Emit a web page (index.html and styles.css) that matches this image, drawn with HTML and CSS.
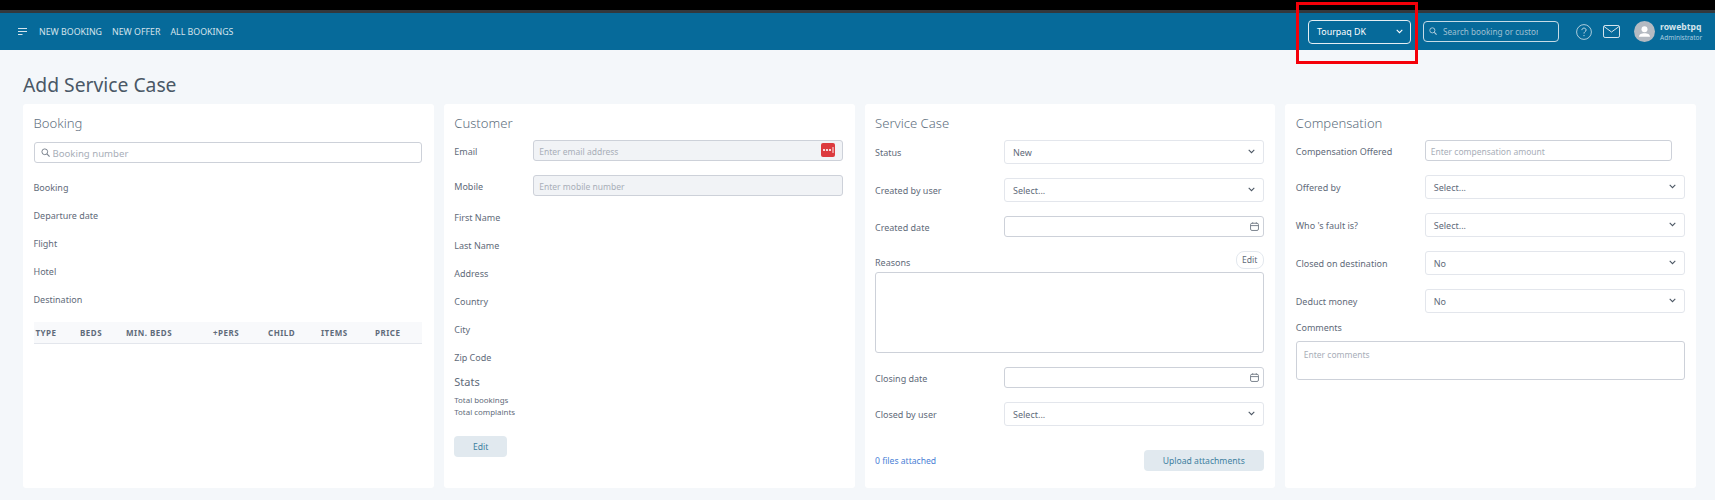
FILE: index.html
```html
<!DOCTYPE html>
<html>
<head>
  <meta name="viewport" content="width=device-width, initial-scale=1.0">
  <title>Add Service Case</title>
  <link rel="stylesheet" href="styles.css">
</head>
<body>
  <svg class="defs" width="0" height="0">
    <symbol id="chevron" viewBox="0 0 10 7"><path d="M1 1.2l4 4 4-4" fill="none" stroke="currentColor" stroke-width="1.5"/></symbol>
    <symbol id="calendar" viewBox="0 0 10 10"><rect x=".6" y="1.4" width="8.8" height="8" rx="1.6" fill="none" stroke="currentColor"/><path d="M.8 4h8.4M3 .3v1.6M7 .3v1.6" fill="none" stroke="currentColor"/></symbol>
    <symbol id="search" viewBox="0 0 10 10"><circle cx="4.2" cy="4.2" r="3.2" fill="none" stroke="currentColor" stroke-width="1.1"/><path d="M6.6 6.6l2.9 2.9" fill="none" stroke="currentColor" stroke-width="1.3"/></symbol>
  </svg>

  <div class="topline"></div>
  <nav class="navbar">
    <svg class="menu-icon" viewBox="0 0 9 8"><path d="M0 .5h9M0 3.5h9M0 6.5h4.5" fill="none" stroke="currentColor" stroke-width="1"/></svg>
    <a class="nav-link">NEW BOOKING</a>
    <a class="nav-link">NEW OFFER</a>
    <a class="nav-link">ALL BOOKINGS</a>
    <div class="nav-right">
      <div class="agency-select">
        <span>Tourpaq DK</span>
        <svg class="agency-chevron"><use href="#chevron"/></svg>
      </div>
      <div class="nav-search">
        <svg class="nav-search-icon"><use href="#search"/></svg>
        <input type="text" placeholder="Search booking or customer">
      </div>
      <svg class="help-icon" viewBox="0 0 16 16"><circle cx="8" cy="8" r="7.4" fill="none" stroke="currentColor" stroke-width=".8"/><path d="M5.9 6.1c0-1.3 1-2 2.1-2s2.1.8 2.1 1.9c0 1.6-2.1 1.7-2.1 3.5" fill="none" stroke="currentColor" stroke-width=".9"/><circle cx="8" cy="11.6" r=".6" fill="currentColor"/></svg>
      <svg class="mail-icon" viewBox="0 0 17 13"><rect x=".5" y=".5" width="16" height="12" rx="1.6" fill="none" stroke="currentColor"/><path d="M1 1.5l7.5 5.5 7.5-5.5" fill="none" stroke="currentColor"/></svg>
      <svg class="avatar" viewBox="0 0 21 21"><circle cx="10.5" cy="10.5" r="10.5" fill="#b4bac2"/><circle cx="10.5" cy="8.2" r="3" fill="#fff"/><path d="M5 15.8c0-2.6 2.5-3.6 5.500-3.6s5.500 1 5.500 3.6z" fill="#fff"/></svg>
      <div class="user">
        <div class="user-name">rowebtpq</div>
        <div class="user-role">Administrator</div>
      </div>
    </div>
  </nav>
  <div class="highlight"></div>

  <h1 class="page-title">Add Service Case</h1>

  <div class="cards">
    <div class="card">
      <h2 class="card-title">Booking</h2>
      <div class="booking-search">
        <svg class="booking-search-icon"><use href="#search"/></svg>
        <input class="control" type="text" placeholder="Booking number">
      </div>
      <div class="plain-row">Booking</div>
      <div class="plain-row">Departure date</div>
      <div class="plain-row">Flight</div>
      <div class="plain-row">Hotel</div>
      <div class="plain-row">Destination</div>
      <div class="rooms-head">
        <span>TYPE</span>
        <span>BEDS</span>
        <span>MIN. BEDS</span>
        <span>+PERS</span>
        <span>CHILD</span>
        <span>ITEMS</span>
        <span>PRICE</span>
      </div>
    </div>

    <div class="card">
      <h2 class="card-title">Customer</h2>
      <div class="field customer-field input-field">
        <label>Email</label>
        <div class="control-wrap">
          <input class="control disabled" type="text" placeholder="Enter email address" disabled>
          <svg class="lastpass" viewBox="0 0 14 14"><rect width="14" height="14" rx="2" fill="#dc3a3e"/><circle cx="3" cy="7" r="1.1" fill="#fff"/><circle cx="6" cy="7" r="1.1" fill="#fff"/><circle cx="9" cy="7" r="1.1" fill="#fff"/><path d="M12 4v6" stroke="#fff" stroke-width=".9"/></svg>
        </div>
      </div>
      <div class="field customer-field input-field">
        <label>Mobile</label>
        <div class="control-wrap">
          <input class="control disabled" type="text" placeholder="Enter mobile number" disabled>
        </div>
      </div>
      <div class="customer-info">
        <div class="plain-row">First Name</div>
        <div class="plain-row">Last Name</div>
        <div class="plain-row">Address</div>
        <div class="plain-row">Country</div>
        <div class="plain-row">City</div>
        <div class="plain-row">Zip Code</div>
      </div>
      <h3 class="stats-title">Stats</h3>
      <div class="stats-row">Total bookings</div>
      <div class="stats-row">Total complaints</div>
      <button class="btn btn-edit">Edit</button>
    </div>

    <div class="card">
      <h2 class="card-title">Service Case</h2>
      <div class="field service-field">
        <label>Status</label>
        <div class="control-wrap select">New<svg class="chevron"><use href="#chevron"/></svg></div>
      </div>
      <div class="field service-field">
        <label>Created by user</label>
        <div class="control-wrap select">Select...<svg class="chevron"><use href="#chevron"/></svg></div>
      </div>
      <div class="field service-field input-field">
        <label>Created date</label>
        <div class="control-wrap">
          <input class="control" type="text">
          <svg class="cal"><use href="#calendar"/></svg>
        </div>
      </div>
      <div class="reasons-head">
        <label>Reasons</label>
        <button class="btn-small">Edit</button>
      </div>
      <textarea class="control reasons"></textarea>
      <div class="field service-field input-field">
        <label>Closing date</label>
        <div class="control-wrap">
          <input class="control" type="text">
          <svg class="cal"><use href="#calendar"/></svg>
        </div>
      </div>
      <div class="field service-field">
        <label>Closed by user</label>
        <div class="control-wrap select">Select...<svg class="chevron"><use href="#chevron"/></svg></div>
      </div>
      <div class="attach-row">
        <a class="files-link">0 files attached</a>
        <button class="btn btn-upload">Upload attachments</button>
      </div>
    </div>

    <div class="card">
      <h2 class="card-title">Compensation</h2>
      <div class="field service-field input-field">
        <label>Compensation Offered</label>
        <div class="control-wrap amount">
          <input class="control" type="text" placeholder="Enter compensation amount">
        </div>
      </div>
      <div class="field service-field">
        <label>Offered by</label>
        <div class="control-wrap select">Select...<svg class="chevron"><use href="#chevron"/></svg></div>
      </div>
      <div class="field service-field">
        <label>Who 's fault is?</label>
        <div class="control-wrap select">Select...<svg class="chevron"><use href="#chevron"/></svg></div>
      </div>
      <div class="field service-field">
        <label>Closed on destination</label>
        <div class="control-wrap select">No<svg class="chevron"><use href="#chevron"/></svg></div>
      </div>
      <div class="field service-field">
        <label>Deduct money</label>
        <div class="control-wrap select">No<svg class="chevron"><use href="#chevron"/></svg></div>
      </div>
      <label class="comments-label">Comments</label>
      <textarea class="control comments" placeholder="Enter comments"></textarea>
    </div>
  </div>
</body>
</html>
```

FILE: styles.css
```css
* {
  box-sizing: border-box;
}

body {
  margin: 0;
  height: 500px;
  overflow: hidden;
  background-color: #f4f7fa;
  font-family: "Noto Sans", Arial, sans-serif;
  font-size: 9px;
  color: #5f6b7a;
}

.defs {
  position: absolute;
}

.topline {
  height: 13px;
  background-color: #000;
  border-bottom: 3px solid #33383d;
}

.navbar {
  display: flex;
  align-items: center;
  height: 37px;
  padding: 0 11px 0 18px;
  background-color: #066a9a;
  color: #d5e4ec;
}

.menu-icon {
  width: 9px;
  height: 8px;
  margin-right: 12px;
}

.nav-link {
  margin-right: 10px;
  font-size: 8.8px;
}

.nav-right {
  display: flex;
  align-items: center;
  margin-left: auto;
}

.agency-select {
  display: flex;
  align-items: center;
  justify-content: space-between;
  width: 103px;
  height: 24px;
  padding: 0 7px 0 8px;
  border: 1px solid #e4eef3;
  border-radius: 4px;
  font-size: 8.9px;
  color: #fff;
}

.agency-chevron {
  width: 7px;
  height: 5px;
}

.nav-search {
  position: relative;
  width: 136px;
  height: 21px;
  margin-left: 12px;
}

.nav-search input {
  width: 100%;
  height: 100%;
  padding: 0 20px 0 19px;
  border: 1px solid #c6dbe6;
  border-radius: 4px;
  background: transparent;
  font-family: inherit;
  font-size: 8.2px;
}

.nav-search input::placeholder {
  color: #9fc0d2;
}

.nav-search-icon {
  position: absolute;
  left: 6px;
  top: 6px;
  width: 8px;
  height: 8px;
  color: #b9d2df;
}

.help-icon {
  width: 16px;
  height: 16px;
  margin-left: 17px;
}

.mail-icon {
  width: 17px;
  height: 13px;
  margin-left: 11px;
}

.avatar {
  width: 21px;
  height: 21px;
  margin-left: 14px;
}

.user {
  width: 44px;
  margin-left: 5px;
}

.user-name {
  font-size: 8.6px;
  font-weight: 700;
  line-height: 12px;
}

.user-role {
  font-size: 6.5px;
  line-height: 9px;
  color: #a9cde0;
}

.highlight {
  position: absolute;
  left: 1296px;
  top: 2px;
  width: 122px;
  height: 62px;
  border: 3px solid #f40009;
}

.page-title {
  height: 54px;
  margin: 0;
  padding: 22px 0 0 23px;
  font-size: 19.3px;
  line-height: 26px;
  font-weight: 400;
  color: #4a5866;
}

.cards {
  display: grid;
  grid-template-columns: repeat(4, 1fr);
  gap: 10px;
  padding: 0 19px 0 23px;
}

.card {
  height: 384px;
  padding: 10px 11.5px 10px 10.5px;
  background-color: #fff;
  border-radius: 3px;
}

.card-title {
  margin: 0 0 8px;
  font-size: 13.1px;
  line-height: 18px;
  font-weight: 300;
  color: #5f7080;
}

.control {
  display: block;
  width: 100%;
  height: 21px;
  padding: 2px 5px 0;
  border: 1px solid #cdd1d9;
  border-radius: 3px;
  background-color: #fff;
  font-family: inherit;
  font-size: 8.5px;
  color: #5f6b7a;
}

.control::placeholder {
  color: #a8aeb8;
  opacity: 1;
}

.control.disabled {
  background-color: #f1f3f6;
}

.booking-search {
  position: relative;
  margin: 10px 0 11px;
}

.booking-search .control {
  padding-left: 18px;
  font-size: 9.6px;
}

.booking-search-icon {
  position: absolute;
  left: 7px;
  top: 6px;
  width: 9px;
  height: 9px;
  color: #7c8590;
}

.plain-row {
  height: 28px;
  line-height: 28px;
}

.rooms-head {
  display: grid;
  grid-template-columns: 44.5px 46px 87px 55px 53px 54px 1fr;
  align-items: center;
  height: 22px;
  margin-top: 8px;
  padding-left: 2px;
  background-color: #f8f9fb;
  border-bottom: 1px solid #e3e6ec;
  font-size: 8px;
  font-weight: 700;
  letter-spacing: .5px;
}

.field {
  display: flex;
  align-items: center;
}

.field label {
  flex-shrink: 0;
}

.input-field label {
  padding-top: 2px;
}

.control-wrap {
  position: relative;
  flex: 1;
}

.customer-field {
  margin-bottom: 14px;
}

.customer-field label {
  width: 79px;
}

.customer-info {
  margin-top: -6px;
}

.stats-title {
  margin: 2px 0 4px;
  font-size: 11px;
  line-height: 16px;
  font-weight: 400;
}

.stats-row {
  font-size: 7.9px;
  line-height: 12px;
}

.lastpass {
  position: absolute;
  right: 8px;
  top: 3px;
  width: 14px;
  height: 14px;
}

.btn {
  border: 0;
  border-radius: 4px;
  background-color: #e1e9ef;
  font-family: inherit;
  font-size: 8.6px;
  color: #3e7f9f;
}

.btn-edit {
  display: block;
  width: 53px;
  height: 21px;
  margin-top: 18px;
}

.service-field {
  margin-bottom: 14px;
}

.service-field label {
  width: 129px;
}

.select {
  display: flex;
  align-items: center;
  height: 24px;
  padding: 0 8px;
  border: 1px solid #e3e6ec;
  border-radius: 3px;
  background-color: #fff;
}

.chevron {
  position: absolute;
  right: 8px;
  top: 8px;
  width: 7px;
  height: 5px;
  color: #4b5663;
}

.cal {
  position: absolute;
  right: 5px;
  top: 6px;
  width: 9px;
  height: 9px;
  color: #6f7884;
}

.amount {
  padding-right: 13px;
}

.reasons-head {
  display: flex;
  align-items: flex-start;
  justify-content: space-between;
  height: 21px;
}

.reasons-head label {
  margin-top: 5px;
  line-height: 14px;
}

.btn-small {
  width: 28px;
  height: 18px;
  padding: 0;
  border: 1px solid #e3e8ee;
  border-radius: 8px;
  background-color: #fff;
  font-family: inherit;
  font-size: 8.6px;
  color: #5f6b7a;
}

.reasons {
  height: 81px;
  margin-bottom: 14px;
  resize: none;
}

.attach-row {
  display: flex;
  align-items: center;
  justify-content: space-between;
  margin-top: 24px;
}

.files-link {
  font-size: 8.6px;
  color: #4a7fd6;
}

.btn-upload {
  width: 120px;
  height: 21px;
}

.comments-label {
  display: block;
  margin-top: -6px;
  line-height: 14px;
}

.comments {
  height: 39px;
  margin-top: 6px;
  padding: 7px 7px;
  resize: none;
}
```
